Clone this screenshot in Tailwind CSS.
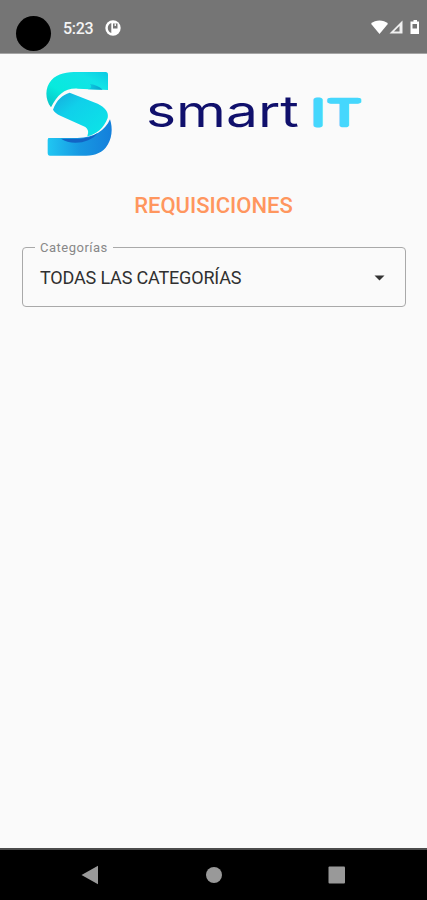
<!DOCTYPE html>
<html lang="es">
<head>
<meta charset="utf-8">
<meta name="viewport" content="width=device-width, initial-scale=1">
<title>Requisiciones</title>
<script src="https://cdn.jsdelivr.net/npm/@tailwindcss/browser@4"></script>
</head>
<body class="flex h-[900px] w-[427px] flex-col overflow-hidden bg-[#fafafa] font-['Roboto',sans-serif]">
  <header class="flex h-[54px] shrink-0 items-center border-b border-[#a5a5a5] bg-[#757575] pl-4 pr-[7px] text-white">
    <div class="mt-[13px] size-[35px] rounded-full bg-black"></div>
    <span class="ml-[12px] mt-[4px] w-[42px] text-[16px] font-medium leading-5 tracking-[-0.3px] text-[#f4f4f4]">5:23</span>
    <svg class="mt-[2px] size-4" viewBox="0 0 16 16"><circle cx="8" cy="8" r="7.7" fill="#fff"/><path d="M6.3 3v10C4 12.2 2.8 10.2 2.8 8S4 3.8 6.3 3zM8 3.500h4.500v5H8z" fill="#757575"/><path d="M9.6 3.5h1.3V6H9.6z" fill="#fff"/></svg>
    <svg class="ml-auto mt-[1px] h-4 w-[49px]" viewBox="0 0 49 16"><path d="M0 4.7C4.5.3 12.5.3 17 4.7L8.5 15z" fill="#fff"/><path d="M31.5 1.5v13H18.5z" fill="#f0f0f0"/><path d="M28.500 7v5.500h-5.500z" fill="#757575"/><path d="M41 2.5h1.500V1h3.500v1.500H48V15H39.500V2.5z" fill="#fff"/><path d="M41.500 5h4.500v4.500h-4.500z" fill="#757575"/></svg>
  </header>
  <main class="flex flex-1 flex-col">
    <div class="flex h-[117px] items-start pl-[35px] pt-[6px]">
      <svg class="h-[105px] w-[90px] shrink-0" viewBox="0 0 270 315" role="img">
        <defs>
          <linearGradient id="top" x1="0" y1="1" x2="1" y2="0"><stop stop-color="#08bfc5"/><stop offset=".35" stop-color="#07eadd"/><stop offset=".75" stop-color="#12e3e7"/><stop offset="1" stop-color="#0bc9e4"/></linearGradient>
          <linearGradient id="mid" x1="0" y1="0" x2="1" y2="1"><stop stop-color="#17a9dc"/><stop offset=".35" stop-color="#10d0ea"/><stop offset="1" stop-color="#0be7e7"/></linearGradient>
          <linearGradient id="low"><stop stop-color="#20c7f2"/><stop offset=".5" stop-color="#1798e2"/><stop offset="1" stop-color="#147fdb"/></linearGradient>
          <linearGradient id="fold"><stop stop-color="#0bcfe2"/><stop offset="1" stop-color="#0b9fcb"/></linearGradient>
        </defs>
        <path d="M48 142C30 119 29 83 49 61C68 39 97 36 128 36H212Q219 36 219 44V90L128 86C88 84 68 105 48 142Z" fill="url(#top)"/>
        <path d="M165 72Q188 75 203 89L158 87.400Q175 84 165 72Z" fill="url(#fold)"/>
        <path d="M54 149C65 119 82 105 104 98L188 131C211 142 222 157 218 174C207 204 184 223 157 229Q164 210 151 201L76 167Q60 160 54 149Z" fill="url(#mid)"/>
        <path d="M40 234H127C177 234 211 211 225 178C234 205 232 239 212 263C195 282 174 287 142 287H45Q38 287 38 278V239Z" fill="url(#low)"/>
        <path d="M78 236H128C153 236 174 229 189 218C174 238 148 248 121 248Q96 248 78 236Z" fill="#1264c5"/>
      </svg>
      <svg class="ml-[10px] mt-[20px] h-[60px] w-[240px] shrink-0" viewBox="0 0 240 60">
        <text x="11" y="46.5" font-family="Inter, sans-serif" font-size="43" font-weight="400" textLength="153" lengthAdjust="spacingAndGlyphs" fill="#10106c">smart</text>
        <text transform="translate(177.3 45) scale(1.25 1)" y="0" font-family="Inter, sans-serif" font-size="34" font-weight="300" fill="#45d7fd" stroke="#45d7fd" stroke-width="5" stroke-linejoin="round">I</text>
        <text transform="translate(192.5 45) scale(1.55 1)" y="0" font-family="Inter, sans-serif" font-size="34" font-weight="200" fill="#45d7fd" stroke="#45d7fd" stroke-width="4.600" stroke-linejoin="round">T</text>
      </svg>
    </div>
    <h1 class="mt-[21px] text-center text-[22px] font-medium leading-[28px] text-[#ff965e]"><span class="inline-block">REQUISICIONES</span></h1>
    <fieldset class="ml-[22px] mt-[20px] flex h-[67px] w-[384px] rounded-[4px] border border-[#a9a9a9] pl-[12px] pr-[20px]">
      <legend class="h-[14px] px-[5px] text-[13px] leading-[16px] tracking-[0.5px] text-[#888]">Categorías</legend>
      <div class="flex h-[48px] w-full items-center justify-between pl-[5px]">
        <span class="text-[18px] leading-6 tracking-[-0.17px] text-[#303030]">TODAS LAS CATEGORÍAS</span>
        <svg class="h-[6px] w-[11px]" viewBox="0 0 11 6"><path d="M.5.5h10l-5 5z" fill="#333"/></svg>
      </div>
    </fieldset>
  </main>
  <nav class="flex h-[52px] shrink-0 items-center border-t-2 border-[#4c4c4c] bg-black pl-[81px]">
    <svg class="h-5 w-[264px]" viewBox="0 0 264 20"><path d="M.5 10L17 .8v18.4z" fill="#999"/><circle cx="133" cy="10" r="8" fill="#999"/><rect x="247.5" y="1.5" width="16.500" height="17" rx="1" fill="#999"/></svg>
  </nav>
</body>
</html>
